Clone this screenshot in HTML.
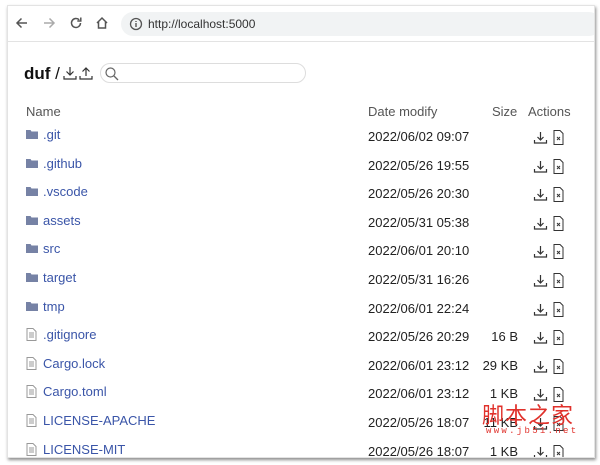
<!DOCTYPE html>
<html><head><meta charset="utf-8"><style>
body{margin:0;width:600px;height:465px;background:#fff;position:relative;overflow:hidden;font-family:"Liberation Sans",Arial,sans-serif;}
.win{position:absolute;left:7px;top:5px;width:586px;height:451px;background:#fff;border:1px solid #e3e3e3;box-shadow:1px 2px 3px rgba(0,0,0,.45);overflow:hidden}
.bar{position:absolute;left:0;top:0;width:586px;height:35px;border-bottom:1px solid #e3e3e3;background:#fff}
.url{position:absolute;left:113px;top:6px;width:480px;height:24px;border-radius:12px;background:#f1f3f4;font-size:12px;color:#333;line-height:24px}
.abs{position:absolute}
.t{position:absolute;font-size:13px;color:#222;white-space:nowrap}
.n{color:#3a55a8}
svg{position:absolute}
.wm{position:absolute;color:#e0312b;font-family:"Noto Sans CJK SC",sans-serif;}
</style></head><body>
<div class="win">
 <div class="bar">
  <svg style="left:6px;top:9px" width="16" height="16" viewBox="0 0 16 16"><path d="M13 8H3M7.5 3.5L3 8l4.5 4.5" stroke="#555" stroke-width="1.5" fill="none"/></svg>
  <svg style="left:33px;top:9px" width="16" height="16" viewBox="0 0 16 16"><path d="M3 8h10M8.5 3.5L13 8l-4.5 4.5" stroke="#aaa" stroke-width="1.5" fill="none"/></svg>
  <svg style="left:60px;top:9px" width="16" height="16" viewBox="0 0 16 16"><path d="M12.5 8a4.5 4.5 0 1 1-1.3-3.2" stroke="#555" stroke-width="1.5" fill="none"/><path d="M12.8 2.5v3.5H9.3" stroke="#555" stroke-width="1.5" fill="none"/></svg>
  <svg style="left:86px;top:9px" width="16" height="16" viewBox="0 0 16 16"><path d="M3 8l5-5 5 5M4.5 7v6h7V7" stroke="#555" stroke-width="1.5" fill="none"/></svg>
  <div class="url"><svg style="left:8px;top:5px" width="14" height="14" viewBox="0 0 14 14"><circle cx="7" cy="7" r="5.5" stroke="#555" stroke-width="1.3" fill="none"/><path d="M7 6v4M7 4v1" stroke="#555" stroke-width="1.4"/></svg><span style="position:absolute;left:27px">http://localhost:5000</span></div>
 </div>
 <div class="t" style="left:16px;top:58px;font-size:17px;font-weight:bold;color:#111">duf <span style="font-weight:normal">/</span></div>
 <svg style="left:54px;top:59px" width="16" height="16" viewBox="0 0 16 16"><path d="M8 2v8M4.5 6.5L8 10l3.5-3.5M2 11v3h12v-3" stroke="#333" stroke-width="1.2" fill="none"/></svg>
 <svg style="left:70px;top:59px" width="16" height="16" viewBox="0 0 16 16"><path d="M8 11V3M4.5 6.5L8 3l3.5 3.5M2 11v3h12v-3" stroke="#333" stroke-width="1.2" fill="none"/></svg>
 <div class="abs" style="left:92px;top:57px;width:204px;height:18px;border:1px solid #ddd;border-radius:10px"></div>
 <svg style="left:96px;top:60px" width="16" height="16" viewBox="0 0 16 16"><circle cx="6.5" cy="6.5" r="4.5" stroke="#666" stroke-width="1.2" fill="none"/><path d="M10 10l4 4" stroke="#666" stroke-width="1.3"/></svg>
 <div class="t" style="left:18px;top:98px;color:#555">Name</div>
 <div class="t" style="left:360px;top:98px;color:#555">Date modify</div>
 <div class="t" style="left:484px;top:98px;color:#555">Size</div>
 <div class="t" style="left:520px;top:98px;color:#555">Actions</div>
 <div id="rows"></div>
 <div class="wm" style="left:474px;top:392px;font-size:22px;letter-spacing:1px">脚本之家</div>
 <div class="wm" style="left:478px;top:420px;font-size:9px;letter-spacing:2.3px;font-family:'Liberation Mono',monospace">www.jb51.net</div>
</div>
<script>
var r=[["d",".git","2022/06/02 09:07",""],["d",".github","2022/05/26 19:55",""],["d",".vscode","2022/05/26 20:30",""],["d","assets","2022/05/31 05:38",""],["d","src","2022/06/01 20:10",""],["d","target","2022/05/31 16:26",""],["d","tmp","2022/06/01 22:24",""],["f",".gitignore","2022/05/26 20:29","16 B"],["f","Cargo.lock","2022/06/01 23:12","29 KB"],["f","Cargo.toml","2022/06/01 23:12","1 KB"],["f","LICENSE-APACHE","2022/05/26 18:07","11 KB"],["f","LICENSE-MIT","2022/05/26 18:07","1 KB"]];
var h="";
r.forEach(function(x,i){var c=130+i*28.6-5;var top=c-8;
var ic=x[0]=="d"?'<svg style="left:18px;top:'+(c-2)+'px" width="12" height="11" viewBox="0 0 12 11"><path d="M0 1h4.5l1 1.5H12V10H0z" fill="#7682a5"/></svg>':'<svg style="left:18px;top:'+(c-3)+'px" width="11" height="13" viewBox="0 0 11 13"><path d="M1 .5h6l3 3v9H1z" fill="#fff" stroke="#999"/><path d="M3 5h5M3 7h5M3 9h5" stroke="#999"/></svg>';
h+=ic+'<div class="t n" style="left:35px;top:'+(top+4)+'px">'+x[1]+'</div><div class="t" style="left:360px;top:'+(top+6)+'px">'+x[2]+'</div>';
if(x[3])h+='<div class="t" style="right:76px;top:'+(top+6)+'px">'+x[3]+'</div>';
h+='<svg style="left:525px;top:'+(c-1)+'px" width="15" height="15" viewBox="0 0 15 15"><path d="M7.5 2v8M4.5 7l3 3 3-3M1.5 10v3h12v-3" stroke="#333" stroke-width="1.2" fill="none"/></svg>';
h+='<svg style="left:545px;top:'+(c-1)+'px" width="11" height="15" viewBox="0 0 11 15"><path d="M1 .5h6l3 3v11H1z" fill="#fff" stroke="#333"/><path d="M4 7l3 3M7 7l-3 3" stroke="#333"/></svg>';});
document.getElementById("rows").innerHTML=h;
</script>
</body></html>
